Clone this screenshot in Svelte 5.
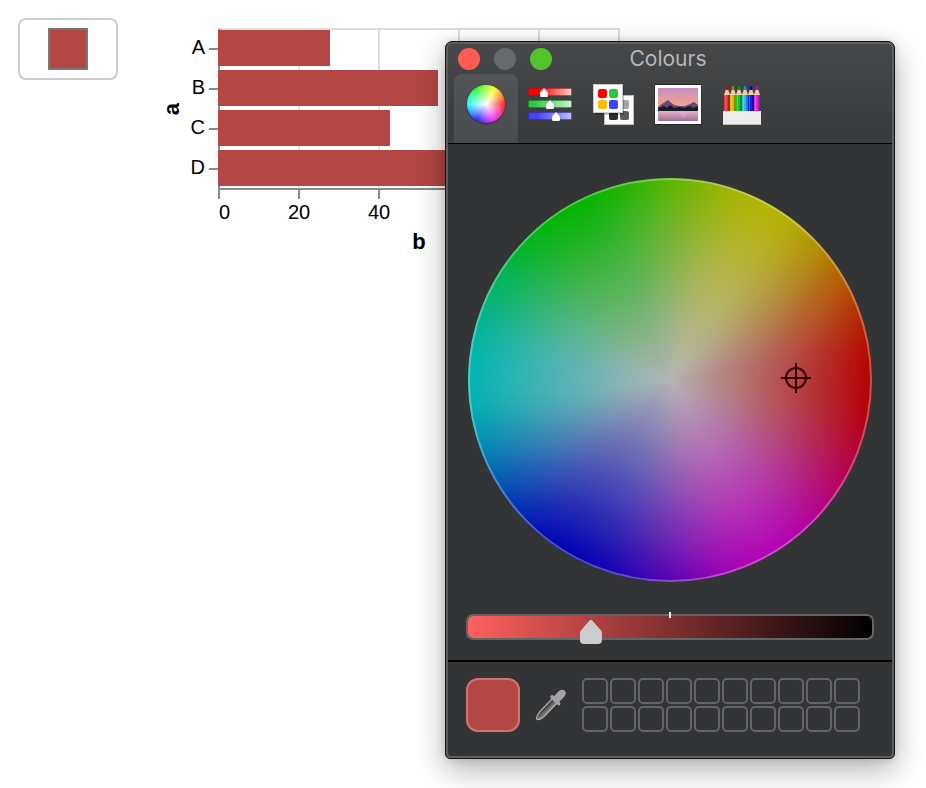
<script>
  let colour = $state('#b44643');
  let brightness = $state(293);
  let tab = $state('wheel');

  const bars = [
    { a: 'A', b: 28 },
    { a: 'B', b: 55 },
    { a: 'C', b: 43 },
    { a: 'D', b: 91 }
  ];
  const gridLines = [0, 20, 40, 60, 80, 100];
  const labels = [0, 20, 40];
  const saved = Array.from({ length: 20 }, (_, i) => i + 1);
  const tabs = [
    { id: 'wheel', name: 'Colour wheel' },
    { id: 'sliders', name: 'Colour sliders' },
    { id: 'palettes', name: 'Colour palettes' },
    { id: 'image', name: 'Image palettes' },
    { id: 'pencils', name: 'Pencils' }
  ];
  const pencils = ['#e8363b', '#dcb51c', '#20c420', '#2fb9f2', '#1420e8', '#e625e0'];
  const tips = ['#d00', '#a87800', '#090', '#0a9be8', '#00d', '#c0c'];

  // Hues run clockwise from red; each 60 degree step eases in and out.
  const primaries = [
    [180, 0, 0],
    [180, 0, 180],
    [0, 0, 180],
    [0, 180, 180],
    [0, 180, 0],
    [180, 180, 0]
  ];
  const hues = Array.from({ length: 73 }, (_, i) => {
    const from = primaries[Math.floor(i / 12) % 6];
    const to = primaries[(Math.floor(i / 12) + 1) % 6];
    const t = (i % 12) / 12;
    const k = t * t * (3 - 2 * t);
    return `rgb(${from.map((v, c) => Math.round(v + (to[c] - v) * k)).join(' ')})`;
  }).join(', ');
</script>

<main>
  <input class="well" type="color" aria-label="Bar colour" bind:value={colour} />

  <svg class="chart" viewBox="0 0 480 240" role="img" aria-label="Bar chart of b by a">
    <g fill="none" stroke="#ddd" stroke-width="2">
      {#each gridLines as g}
        <path d="M{59 + g * 4} 11V171" />
      {/each}
      <path d="M58 11H460" />
    </g>
    <g fill="none" stroke="#888" stroke-width="2">
      <path d="M59 11V181M58 171H460" />
      {#each gridLines as g}
        <path d="M{59 + g * 4} 171V181" />
      {/each}
    </g>
    {#each bars as bar, i}
      <path d="M49 {31 + i * 40}H59" stroke="#888" stroke-width="2" />
      <rect x="58" y={12 + i * 40} width={bar.b * 4} height="36" fill={colour} />
      <text x="45" y={36 + i * 40} text-anchor="end">{bar.a}</text>
    {/each}
    {#each labels as n}
      <text x={59 + n * 4} y="201" text-anchor={n === 0 ? 'start' : 'middle'}>{n}</text>
    {/each}
    <text class="axis" x="259" y="231" text-anchor="middle">b</text>
    <text class="axis" transform="translate(19 91) rotate(-90)" text-anchor="middle">a</text>
  </svg>

  <section class="window" aria-label="Colours">
    <header>
      <div class="titlebar">
        <div class="lights">
          <button class="red" aria-label="Close"></button>
          <button class="grey" aria-label="Minimise"></button>
          <button class="green" aria-label="Zoom"></button>
        </div>
        <h1>Colours</h1>
      </div>
      <nav>
        {#each tabs as t}
          <button class:active={tab === t.id} aria-label={t.name} onclick={() => (tab = t.id)}>
            {#if t.id === 'wheel'}
              <span class="mini"></span>
            {:else if t.id === 'sliders'}
              <svg width="48" height="44" viewBox="0 0 48 44">
                <defs>
                  <linearGradient id="sr"><stop offset=".25" stop-color="#f00" /><stop offset="1" stop-color="#fcc" /></linearGradient>
                  <linearGradient id="sg"><stop offset=".1" stop-color="#28c840" /><stop offset="1" stop-color="#c8f6c8" /></linearGradient>
                  <linearGradient id="sb"><stop offset=".2" stop-color="#4444ff" /><stop offset="1" stop-color="#bdbdff" /></linearGradient>
                </defs>
                <rect x="2.5" y="6.5" width="43" height="7" rx="1" fill="url(#sr)" stroke="#c00" stroke-opacity=".35" />
                <rect x="2.5" y="18.5" width="43" height="7" rx="1" fill="url(#sg)" stroke="#080" stroke-opacity=".35" />
                <rect x="2.5" y="30.5" width="43" height="7" rx="1" fill="url(#sb)" stroke="#22a" stroke-opacity=".35" />
                <g fill="#fff" stroke="#000" stroke-opacity=".2" stroke-width=".5">
                  <path d="M18 6L22 10.500V14Q22 15 21 15H15Q14 15 14 14V10.500Z" />
                  <path d="M24 18L28 22.500V26Q28 27 27 27H21Q20 27 20 26V22.500Z" />
                  <path d="M30 30L34 34.500V38Q34 39 33 39H27Q26 39 26 38V34.500Z" />
                </g>
              </svg>
            {:else if t.id === 'palettes'}
              <svg width="48" height="44" viewBox="0 0 48 44">
                <rect x="14.500" y="13.500" width="29" height="29" fill="#fff" stroke="#bbb" />
                <rect x="30" y="18" width="9" height="9" rx="2" fill="#a3a4a6" />
                <rect x="19" y="29" width="9" height="9" rx="2" fill="#2d2d2f" />
                <rect x="30" y="29" width="9" height="9" rx="2" fill="#5c5d60" />
                <rect x="5" y="5" width="29" height="28" fill="#000" opacity=".25" />
                <rect x="3.500" y="2.500" width="29" height="28" fill="#fff" stroke="#c8c8c8" />
                <rect x="8" y="7" width="9" height="9" rx="2" fill="#f00" />
                <rect x="19" y="7" width="9" height="9" rx="2" fill="#28cc42" />
                <rect x="8" y="18" width="9" height="9" rx="2" fill="#ffbd00" />
                <rect x="19" y="18" width="9" height="9" rx="2" fill="#4040ff" />
              </svg>
            {:else if t.id === 'image'}
              <svg width="48" height="44" viewBox="0 0 48 44">
                <defs>
                  <linearGradient id="sky" x2="0" y2="1"><stop stop-color="#c48ec0" /><stop offset=".5" stop-color="#f3a18e" /><stop offset="1" stop-color="#ffd680" /></linearGradient>
                  <linearGradient id="lake" x2="0" y2="1"><stop stop-color="#e8b4c8" /><stop offset="1" stop-color="#a26c9c" /></linearGradient>
                </defs>
                <rect x=".5" y="2" width="47" height="41" fill="#222" />
                <rect x="1" y="3" width="46" height="39" fill="#fff" />
                <rect x="4" y="6" width="40" height="33" fill="url(#sky)" />
                <path d="M4 25L8 22L14 18L20 23L25 24H31L36 22L40 20L44 23V29H4Z" fill="#5f4a78" />
                <path d="M4 26L10 24L13 26L16 23L20 26L25 25L30 26L36 24L39 26L44 24V29H4Z" fill="#1c1a22" />
                <rect x="4" y="29" width="40" height="10" fill="url(#lake)" />
                <path d="M25 30H33L31 36H28Z" fill="#f3d0c8" opacity=".2" />
              </svg>
            {:else}
              <svg width="48" height="44" viewBox="0 0 48 44">
                {#each pencils as p, i}
                  <rect x={6 + i * 6} y="12" width="6" height="18" fill={p} />
                  <rect x={10 + i * 6} y="12" width="2" height="18" fill="#000" opacity=".3" />
                  <rect x={7 + i * 6} y="12" width="1" height="18" fill="#fff" opacity=".25" />
                  <path d="M{6 + i * 6} 13L{8 + i * 6} 7H{10 + i * 6}L{12 + i * 6} 13Z" fill="#efd0a4" />
                  <path d="M{7.500 + i * 6} 8L{8 + i * 6} 4.500Q{9 + i * 6} 3 {10 + i * 6} 4.500L{10.500 + i * 6} 8Z" fill={tips[i]} />
                {/each}
                <rect x="5" y="29" width="38" height="14" fill="#ececec" />
                <path d="M5 42.500H43" stroke="#bbb" />
              </svg>
            {/if}
          </button>
        {/each}
      </nav>
    </header>

    <div class="picker">
      <div class="wheel" style="--hues: {hues}">
        <svg class="target" width="30" height="30" viewBox="0 0 30 30" fill="none" stroke="#300" stroke-width="2">
          <circle cx="15" cy="15" r="10" />
          <path d="M15 0V30M0 15H30" />
        </svg>
      </div>
      <div class="level">
        <input type="range" min="0" max="1000" aria-label="Brightness" bind:value={brightness} />
      </div>
    </div>

    <footer>
      <div class="current" style="background-color: {colour}"></div>
      <button class="dropper" aria-label="Pick a colour from the screen">
        <svg width="32" height="32" viewBox="0 0 32 32">
          <defs>
            <linearGradient id="glass" x1="0" y1="0" x2="1" y2="1"><stop offset=".4" stop-color="#2c2d2f" /><stop offset=".55" stop-color="#77787a" /></linearGradient>
          </defs>
          <path d="M17.500 9.500L22 14L10 26.500Q6 30.500 3 30.500Q1.500 30.500 1.500 29Q2 26 5.500 22Z" fill="url(#glass)" stroke="#aaabac" stroke-width="1.300" />
          <path d="M15.500 9Q14.500 6.500 17 6L19.500 7Q22.500 2.500 25.500 1Q29 0 30.500 2.500Q31.500 5 29 8L24.500 12.500L25.500 14.500Q25.500 16.500 23.500 16.500Z" fill="#a3a4a5" />
        </svg>
      </button>
      <div class="saved">
        {#each saved as n}
          <button aria-label="Saved colour {n}"></button>
        {/each}
      </div>
    </footer>
  </section>
</main>

<style>
  :global(body) {
    margin: 0;
    background: #fff;
  }
  main {
    position: relative;
    display: flex;
    align-items: flex-start;
    gap: 42px;
    min-height: 100vh;
    padding: 18px;
    box-sizing: border-box;
    overflow: hidden;
    font-family: Inter, 'Liberation Sans', sans-serif;
  }
  button {
    padding: 0;
    border: 0;
    background: none;
  }
  svg {
    display: block;
  }
  .well {
    appearance: none;
    flex: none;
    box-sizing: border-box;
    width: 100px;
    height: 62px;
    padding: 0;
    border: 2px solid #ccc;
    border-radius: 8px;
    background: #fff;
  }
  .well::-webkit-color-swatch-wrapper {
    padding: 8px 28px;
  }
  .well::-webkit-color-swatch {
    border: 2px solid #777;
    border-radius: 0;
  }
  .chart {
    flex: none;
    width: 480px;
    height: 240px;
    font: 20px 'Liberation Sans', Arial, sans-serif;
  }
  .axis {
    font-size: 22px;
    font-weight: bold;
  }
  .window {
    position: absolute;
    top: 41px;
    left: 445px;
    box-sizing: border-box;
    width: 450px;
    border: 1px solid #151618;
    border-radius: 7px 7px 5px 5px;
    background: #5c5d5f;
    padding: 2px;
    box-shadow: 0 10px 30px rgba(0, 0, 0, 0.32), 0 0 8px rgba(0, 0, 0, 0.12);
  }
  header {
    padding: 0 6px;
    border-bottom: 1px solid #000;
    border-radius: 4px 4px 0 0;
    background: linear-gradient(#474849, #38393b);
  }
  .titlebar {
    display: grid;
    grid-template-columns: 1fr auto 1fr;
    align-items: center;
    height: 30px;
  }
  .lights {
    display: flex;
    gap: 14px;
    padding-left: 4px;
  }
  .lights button {
    width: 22px;
    height: 22px;
    border-radius: 50%;
  }
  .red {
    background: #ff5c54;
  }
  .grey {
    background: #68696b;
  }
  .green {
    background: #54c22b;
  }
  h1 {
    margin: 0;
    padding-right: 4px;
    color: #b6b7b8;
    font-size: 21px;
    font-weight: 400;
    line-height: 28px;
  }
  nav {
    display: flex;
  }
  nav button {
    display: flex;
    justify-content: center;
    width: 64px;
    height: 69px;
    padding-top: 8px;
    border-radius: 8px 8px 0 0;
  }
  nav .active {
    background: linear-gradient(#535456, #4b4c4e);
  }
  .mini {
    width: 38px;
    height: 38px;
    margin-top: 3px;
    border-radius: 50%;
    background:
      radial-gradient(closest-side, #fff, rgba(255, 255, 255, 0)),
      conic-gradient(from 90deg, #f22, #f2f, #22f, #2ff, #2f2, #ff2, #f22);
    box-shadow: 0 1px 2px rgba(0, 0, 0, 0.4);
  }
  .picker {
    padding: 34px 18px 20px;
    border-bottom: 2px solid #000;
    background: #333436;
  }
  .wheel {
    position: relative;
    margin: 0 2px;
    aspect-ratio: 1;
    border-radius: 50%;
    background:
      radial-gradient(closest-side, #b4b4b4, rgba(180, 180, 180, 0)),
      conic-gradient(from 90deg, var(--hues));
  }
  .wheel::after {
    content: '';
    position: absolute;
    inset: 0;
    border: 2px solid rgba(255, 255, 255, 0.3);
    border-radius: 50%;
  }
  .target {
    position: absolute;
    top: 185px;
    left: 313px;
  }
  .level {
    position: relative;
    margin-top: 32px;
  }
  .level::before {
    content: '';
    position: absolute;
    top: -2px;
    left: calc(50% - 1px);
    width: 2px;
    height: 6px;
    background: #eee;
  }
  .level input {
    appearance: none;
    display: block;
    box-sizing: border-box;
    width: 100%;
    height: 26px;
    margin: 0;
    border: 2px solid #646567;
    border-radius: 7px;
    background: linear-gradient(90deg, #ff605e, #000) padding-box;
  }
  .level input::-webkit-slider-runnable-track {
    height: 22px;
  }
  .level input::-webkit-slider-thumb {
    appearance: none;
    width: 22px;
    height: 24px;
    margin-top: 4px;
    border-radius: 0 0 4px 4px;
    background: #ccc;
    clip-path: polygon(46% 0, 54% 0, 96% 44%, 100% 52%, 100% 100%, 0 100%, 0 52%, 4% 44%);
  }
  footer {
    display: flex;
    align-items: center;
    padding: 16px 18px 24px;
    border-radius: 0 0 3px 3px;
    background: #333436;
  }
  .current {
    box-sizing: border-box;
    width: 54px;
    height: 54px;
    border: 2px solid #cf7675;
    border-radius: 12px;
  }
  .dropper {
    margin: 0 15px;
  }
  .saved {
    display: grid;
    grid-template-columns: repeat(10, 26px);
    gap: 2px;
  }
  .saved button {
    height: 26px;
    border: 2px solid #646567;
    border-radius: 5px;
  }
</style>
